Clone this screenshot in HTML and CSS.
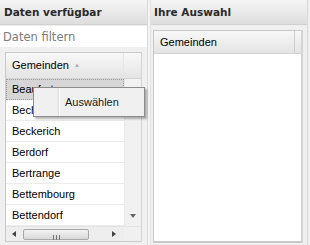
FILE: index.html
```html
<!DOCTYPE html>
<html lang="de">
<head>
  <meta charset="UTF-8">
  <title>Datenauswahl</title>
  <link rel="stylesheet" href="styles.css">
</head>
<body>
  <div class="layout">
    <div class="panel left">
      <div class="panel-header">Daten verfügbar</div>
      <input class="filter" type="text" placeholder="Daten filtern">
      <div class="panel-body">
        <div class="grid">
          <div class="grid-head">
            <div class="col">Gemeinden <span class="sort">&#9650;</span></div>
            <div class="col-rest"></div>
          </div>
          <div class="grid-main">
            <div class="rows">
              <div class="row selected">Beaufort</div>
              <div class="row">Bech</div>
              <div class="row">Beckerich</div>
              <div class="row">Berdorf</div>
              <div class="row">Bertrange</div>
              <div class="row">Bettembourg</div>
              <div class="row">Bettendorf</div>
            </div>
            <div class="vscroll">
              <span class="arrow up"></span>
              <span class="arrow down"></span>
            </div>
          </div>
          <div class="hscroll">
            <span class="harrow l"></span>
            <div class="track"><div class="thumb"><span class="grip"></span></div></div>
            <span class="harrow r"></span>
            <div class="corner"></div>
          </div>
        </div>
      </div>

      <!-- context menu -->
      <div class="menu">
        <div class="menu-icon"></div>
        <div class="menu-item">Auswählen</div>
      </div>
    </div>

    <div class="splitter"></div>

    <div class="panel right">
      <div class="panel-header">Ihre Auswahl</div>
      <div class="panel-body">
        <div class="grid empty">
          <div class="grid-head">
            <div class="col wide">Gemeinden</div>
            <div class="col-rest"></div>
          </div>
        </div>
      </div>
    </div>
  </div>
</body>
</html>
```

FILE: styles.css
```css
* {
  margin: 0;
  padding: 0;
  box-sizing: border-box;
}

body {
  font-family: "Liberation Sans", Arial, sans-serif;
  font-size: 11px;
  background-color: #f0f0f0;
  color: #000;
}

.layout {
  display: flex;
  width: 310px;
  height: 245px;
  overflow: hidden;
}

.panel {
  display: flex;
  flex-direction: column;
  background: #f0f0f0;
}

.panel.left {
  position: relative;
  width: 148px;
  border-right: 1px solid #dadada;
}

.panel.right {
  width: 158px;
  border-left: 1px solid #e2e2e2;
  border-right: 1px solid #d8d8d8;
}

.splitter {
  width: 2px;
  background: #f4f4f4;
}

.panel-header {
  flex: none;
  height: 25px;
  line-height: 25px;
  padding-left: 4px;
  font-family: "DejaVu Sans", Verdana, sans-serif;
  font-size: 10.5px;
  font-weight: bold;
  color: #2a2a2a;
  background: linear-gradient(#f5f5f5, #dedede);
  border-bottom: 1px solid #d0d0d0;
}

.right .panel-header {
  padding-left: 3px;
}

.filter {
  flex: none;
  display: block;
  width: 100%;
  height: 21px;
  margin-top: 1px;
  padding: 1px 0 0 3px;
  border: none;
  outline: none;
  background: #fff;
  font-family: "DejaVu Sans", Verdana, sans-serif;
  font-size: 11.5px;
}

.filter::placeholder {
  color: #7c7c7c;
}

.panel-body {
  flex: 1;
  padding: 5px 5px 6px 5px;
}

.right .panel-body {
  padding: 5px 4px 2px 2px;
}

.grid {
  display: flex;
  flex-direction: column;
  height: 100%;
  background: #fff;
  border: 1px solid #c9c9c9;
  border-right-color: #d4d4d4;
}

.grid.empty {
  border-width: 1px 2px 2px 1px;
}

.grid-head {
  flex: none;
  display: flex;
  height: 26px;
  background: linear-gradient(#f8f8f8, #e4e4e4);
  border-bottom: 1px solid #d4d4d4;
}

.empty .grid-head {
  height: 23px;
}

.col {
  flex: 1;
  line-height: 25px;
  padding-left: 6px;
  border-right: 1px solid #e6e6e6;
}

.empty .col {
  line-height: 22px;
}

.col.wide {
  border-right: 1px solid #cfcfcf;
}

.col-rest {
  width: 17px;
}

.empty .col-rest {
  width: 6px;
}

.sort {
  font-size: 6px;
  color: #a8a8a8;
  vertical-align: 2px;
  margin-left: 2px;
}

.grid-main {
  display: flex;
  flex: 1;
  overflow: hidden;
}

.rows {
  flex: 1;
  overflow: hidden;
}

.row {
  height: 21px;
  line-height: 21px;
  padding-left: 6px;
  border-bottom: 1px solid #ececec;
  white-space: nowrap;
}

.row.selected {
  background: #d6d6d6;
  border: 1px dotted #9a9a9a;
  line-height: 19px;
  padding-left: 5px;
}

.vscroll {
  position: relative;
  width: 17px;
  background: #f1f1f1;
  border-left: 1px solid #e8e8e8;
}

.arrow {
  position: absolute;
  left: 5px;
  width: 0;
  height: 0;
  border-left: 3px solid transparent;
  border-right: 3px solid transparent;
}

.arrow.up {
  top: 8px;
  border-bottom: 3px solid #666;
}

.arrow.down {
  bottom: 8px;
  border-top: 4px solid #666;
}

.hscroll {
  flex: none;
  position: relative;
  display: flex;
  align-items: center;
  height: 15px;
  background: #eeeeee;
  border-top: 1px solid #e4e4e4;
}

.harrow {
  width: 0;
  height: 0;
  border-top: 3px solid transparent;
  border-bottom: 3px solid transparent;
}

.harrow.l {
  margin-left: 6px;
  border-right: 4px solid #444;
}

.harrow.r {
  margin-left: 23px;
  border-left: 4px solid #444;
}

.track {
  width: 66px;
  margin-left: 7px;
}

.thumb {
  height: 11px;
  border: 1px solid #a9a9a9;
  border-radius: 2px;
  background: linear-gradient(#f4f4f4, #d8d8d8);
  text-align: center;
}

.grip {
  display: inline-block;
  width: 7px;
  height: 5px;
  margin-top: 2px;
  border-left: 1px solid #777;
  border-right: 1px solid #777;
  background: linear-gradient(90deg, transparent 2px, #777 2px, #777 3px, transparent 3px);
}

.corner {
  position: absolute;
  right: 0;
  top: 0;
  width: 17px;
  height: 14px;
  background: #f0f0f0;
}

.menu {
  position: absolute;
  left: 33px;
  top: 87px;
  display: flex;
  width: 112px;
  height: 30px;
  background: #f0f0f0;
  border: 1px solid #8c8c8c;
  box-shadow: 2px 2px 2px rgba(0, 0, 0, 0.3);
}

.menu-icon {
  width: 25px;
  border-right: 1px solid #dcdcdc;
  box-shadow: 1px 0 0 #fff;
}

.menu-item {
  padding-left: 6px;
  line-height: 28px;
  color: #1a1a1a;
}
```
